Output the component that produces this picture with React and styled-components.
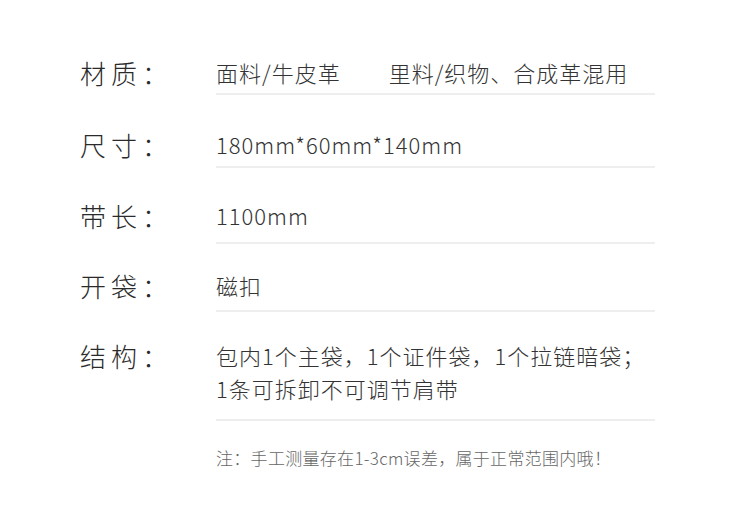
import React from 'react';
import styled, { createGlobalStyle } from 'styled-components';

const GlobalStyle = createGlobalStyle`
  html, body {
    margin: 0;
    padding: 0;
    background: #ffffff;
  }
  body {
    font-family: "Noto Sans CJK SC", "Noto Sans", sans-serif;
  }
`;

const Page = styled.div`
  width: 750px;
  height: 530px;
  padding: 0 95px 0 80px;
  box-sizing: border-box;
  overflow: hidden;
`;

const Row = styled.div`
  display: grid;
  grid-template-columns: 136px 439px;
  align-items: start;
  padding-top: ${props => props.top}px;
`;

const Label = styled.div`
  font-size: 26px;
  line-height: 33px;
  letter-spacing: 5px;
  color: #2a2a2a;
  font-weight: 300;
  white-space: nowrap;
`;

const Value = styled.div`
  font-size: 22px;
  line-height: 33px;
  letter-spacing: 1px;
  color: #333333;
  font-weight: 300;
  padding-bottom: ${props => props.bottom}px;
  border-bottom: 2px solid #eeeeee;
  white-space: nowrap;
`;

const Gap = styled.span`
  display: inline-block;
  width: 48px;
`;

const Note = styled.div`
  margin-left: 136px;
  padding-top: ${props => props.top}px;
  font-size: 17px;
  line-height: 24px;
  letter-spacing: 0.3px;
  color: #666666;
  font-weight: 300;
`;

const specs = [
  { label: '材质：', top: 56, bottom: 4, value: <>面料/牛皮革<Gap />里料/织物、合成革混用</> },
  { label: '尺寸：', top: 33, bottom: 5, value: '180mm*60mm*140mm' },
  { label: '带长：', top: 31, bottom: 10, value: '1100mm' },
  { label: '开袋：', top: 25, bottom: 8, value: '磁扣' },
  { label: '结构：', top: 27, bottom: 14, value: <>包内1个主袋，1个证件袋，1个拉链暗袋；<br />1条可拆卸不可调节肩带</> },
];

const App = () => (
  <>
    <GlobalStyle />
    <Page>
      {specs.map(item => (
        <Row key={item.label} top={item.top}>
          <Label>{item.label}</Label>
          <Value bottom={item.bottom}>{item.value}</Value>
        </Row>
      ))}
      <Note top={25}>注：手工测量存在1-3cm误差，属于正常范围内哦！</Note>
    </Page>
  </>
);

export default App;
